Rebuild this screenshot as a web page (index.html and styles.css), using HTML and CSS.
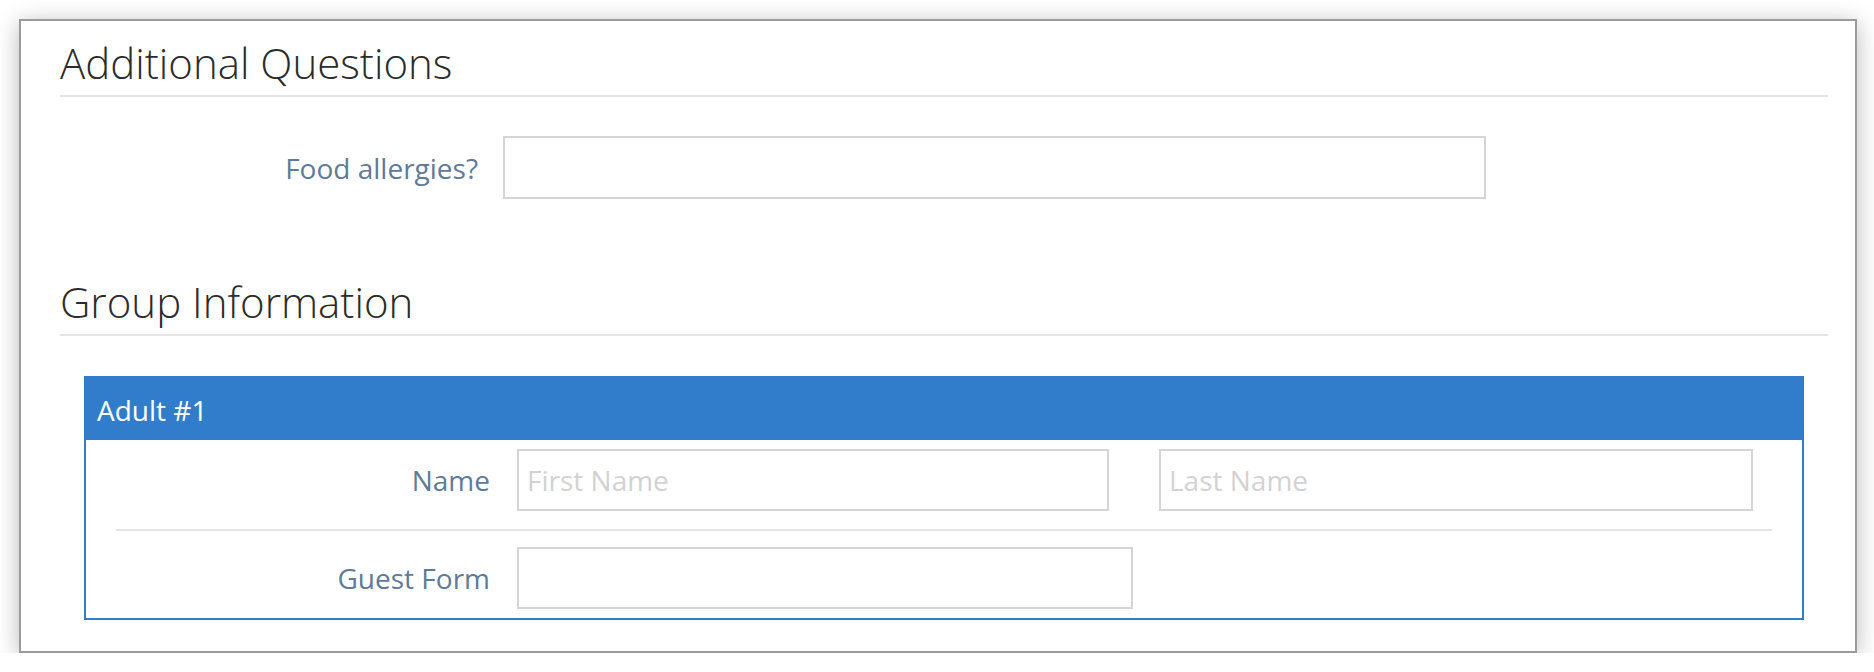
FILE: index.html
```html
<!DOCTYPE html>
<html lang="en">
<head>
    <meta charset="UTF-8">
    <meta name="viewport" content="width=device-width, initial-scale=1.0">
    <title>Registration</title>
    <link rel="stylesheet" href="styles.css">
</head>
<body>

<div class="window">
    <h2 class="section-title">Additional Questions</h2>
    <div class="form-row">
        <label class="form-label" for="allergies">Food allergies?</label>
        <input type="text" id="allergies" class="form-input allergies-input">
    </div>

    <h2 class="section-title group-title">Group Information</h2>
    <div class="guest-panel">
        <div class="guest-heading">Adult #1</div>
        <div class="guest-body">
            <div class="guest-row">
                <label class="guest-label">Name</label>
                <div class="name-fields">
                    <input type="text" class="form-input first-name" placeholder="First Name">
                    <input type="text" class="form-input last-name" placeholder="Last Name">
                </div>
            </div>
            <div class="guest-divider"></div>
            <div class="guest-row">
                <label class="guest-label">Guest Form</label>
                <input type="text" class="form-input guest-form">
            </div>
        </div>
    </div>
</div>

</body>
</html>
```

FILE: styles.css
```css
body {
    margin: 0;
    background-color: #fff;
    font-family: "Open Sans", "Liberation Sans", sans-serif;
}
.window {
    margin: 19px 17px 0 19px;
    height: 634px;
    box-sizing: border-box;
    padding: 0 27px 0 39px;
    background-color: #fff;
    border: 2px solid #9b9b9b;
    box-shadow: 0 4px 22px rgba(0, 0, 0, 0.28);
}
.section-title {
    margin: 19px 0 0;
    padding-bottom: 9px;
    border-bottom: 2px solid #e4e4e4;
    font-size: 42px;
    font-weight: 300;
    line-height: 46px;
    color: #2b2b2b;
}
.group-title {
    margin-top: 80px;
}
.form-row {
    display: flex;
    align-items: center;
    margin-top: 39px;
}
.form-label, .guest-label {
    text-align: right;
    font-size: 28px;
    line-height: 40px;
    color: #607a98;
}
.form-label {
    width: 418px;
    margin-right: 25px;
}
.form-input {
    box-sizing: border-box;
    height: 62px;
    padding: 0 8px;
    border: 2px solid #d5d5d5;
    border-radius: 0;
    font-family: inherit;
    font-size: 28px;
    color: #555;
    outline: none;
}
.form-input::placeholder {
    color: #d2d2d2;
}
.allergies-input {
    width: 983px;
    height: 63px;
}
.guest-panel {
    margin: 40px 24px 0;
    border: 2px solid #317dcb;
}
.guest-heading {
    padding: 12px 11px 10px;
    background-color: #317dcb;
    color: #fff;
    font-size: 28px;
    line-height: 40px;
}
.guest-body {
    padding: 9px 0;
}
.guest-row {
    display: flex;
    align-items: center;
}
.guest-label {
    width: 404px;
    margin-right: 27px;
}
.name-fields {
    display: flex;
    gap: 50px;
}
.first-name {
    width: 592px;
}
.last-name {
    width: 594px;
}
.guest-form {
    width: 616px;
}
.guest-divider {
    height: 2px;
    margin: 18px 30px 16px;
    background-color: #e4e4e4;
}
```
